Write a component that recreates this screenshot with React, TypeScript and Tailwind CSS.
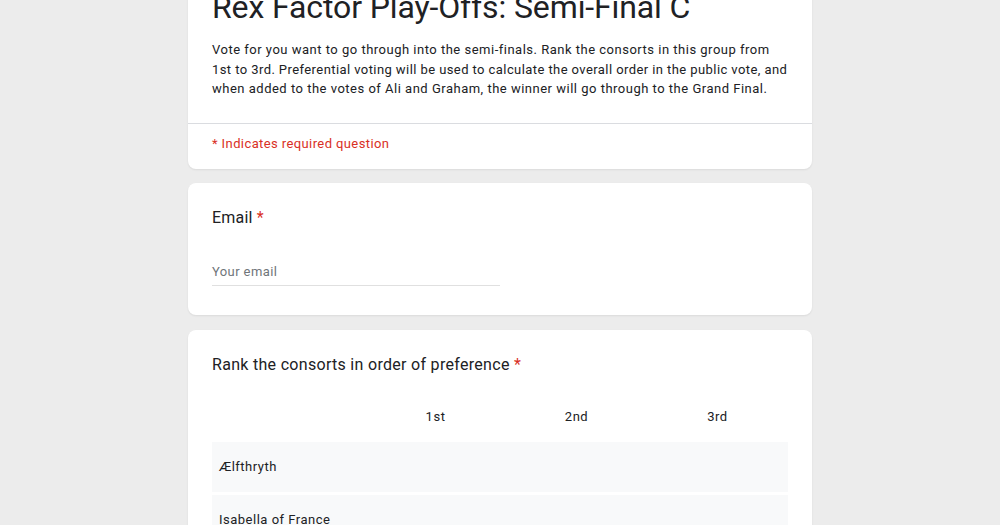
import React from 'react';

const consorts = ['Ælfthryth', 'Isabella of France', 'Philippa of Hainault'];
const ranks = ['1st', '2nd', '3rd'];

function Card({ children, className = '' }: { children: React.ReactNode; className?: string }) {
  return (
    <div className={`rounded-lg bg-white shadow-[0_1px_2px_rgba(0,0,0,0.08)] ${className}`}>
      {children}
    </div>
  );
}

function App() {
  return (
    <div className="h-[525px] overflow-hidden bg-[#ececec] font-['Roboto',sans-serif] text-[#202124]">
      <div className="mx-auto -mt-[35px] flex w-[624px] flex-col">
        {/* Header */}
        <Card>
          <div className="px-6 pt-[22px] pb-6">
            <h1 className="whitespace-nowrap text-[32px] leading-10 font-normal tracking-[-0.12px]">
              Rex Factor Play-Offs: Semi-Final C
            </h1>
            <p className="mt-[13px] text-[13px] leading-[19.5px] tracking-[0.5px]">
              <span className="block whitespace-nowrap">
                Vote for you want to go through into the semi-finals. Rank the consorts in this group from
              </span>
              <span className="block whitespace-nowrap tracking-[0.42px]">
                1st to 3rd. Preferential voting will be used to calculate the overall order in the public vote, and
              </span>
              <span className="block whitespace-nowrap">
                when added to the votes of Ali and Graham, the winner will go through to the Grand Final.
              </span>
            </p>
          </div>
          <div className="border-t border-[#dadce0] px-6 pt-[10px] pb-[15px] text-[13px] leading-5 tracking-[0.4px] text-[#d93025]">
            * Indicates required question
          </div>
        </Card>

        {/* Email */}
        <Card className="mt-[14px] px-6 pt-[25px] pb-[29px]">
          <div className="text-base leading-5 tracking-[0.2px]">
            Email <span className="text-[#d93025]">*</span>
          </div>
          <div className="mt-[34px] w-[288px] border-b border-[#e0e0e0] pb-[3px] text-[13px] leading-5 tracking-[0.4px] text-[#70757a]">
            Your email
          </div>
        </Card>

        {/* Grid question */}
        <Card className="mt-[15px] px-6 pt-[23px] pb-6">
          <div className="text-base leading-6 tracking-[0.3px]">
            Rank the consorts in order of preference <span className="text-[#d93025]">*</span>
          </div>
          <div className="mt-[30px] grid grid-cols-[153px_1fr_1fr_1fr] text-[13px] leading-5 tracking-[0.5px]">
            <div />
            {ranks.map((r) => (
              <div key={r} className="text-center">
                {r}
              </div>
            ))}
          </div>
          <div className="mt-[15px] flex flex-col gap-[3px]">
            {consorts.map((c) => (
              <div
                key={c}
                className="grid h-[50px] grid-cols-[153px_1fr_1fr_1fr] items-center bg-[#f8f9fa] text-[13px] tracking-[0.5px]"
              >
                <div className="pl-[7px]">{c}</div>
                <div />
                <div />
                <div />
              </div>
            ))}
          </div>
        </Card>
      </div>
    </div>
  );
}

export default App;
